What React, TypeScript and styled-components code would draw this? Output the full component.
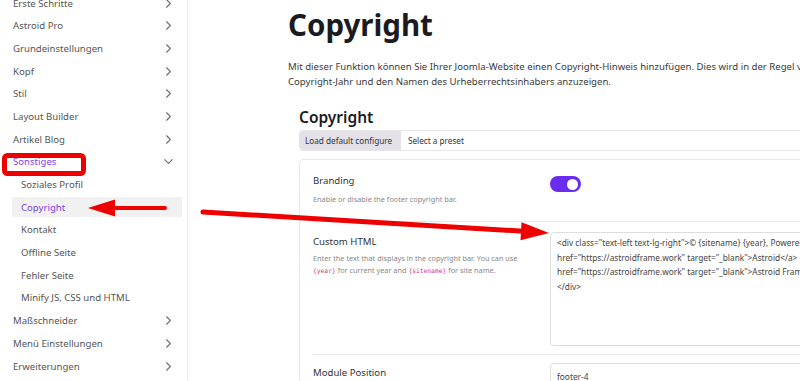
import React from 'react'
import styled, { createGlobalStyle } from 'styled-components'
import { ChevronRight, ChevronDown } from 'lucide-react'

const GlobalStyle = createGlobalStyle`
  html, body {
    margin: 0;
    padding: 0;
    background: #fff;
    overflow: hidden;
  }
  body {
    font-family: "Noto Sans", "Open Sans", sans-serif;
    color: #333;
  }
`

type TNavItem = {
  label: string
  sub?: boolean
  active?: boolean
  open?: boolean
  arrow?: boolean
}

const navItems: TNavItem[] = [
  { label: 'Erste Schritte', arrow: true },
  { label: 'Astroid Pro', arrow: true },
  { label: 'Grundeinstellungen', arrow: true },
  { label: 'Kopf', arrow: true },
  { label: 'Stil', arrow: true },
  { label: 'Layout Builder', arrow: true },
  { label: 'Artikel Blog', arrow: true },
  { label: 'Sonstiges', arrow: true, open: true, active: true },
  { label: 'Soziales Profil', sub: true },
  { label: 'Copyright', sub: true, active: true },
  { label: 'Kontakt', sub: true },
  { label: 'Offline Seite', sub: true },
  { label: 'Fehler Seite', sub: true },
  { label: 'Minify JS, CSS und HTML', sub: true },
  { label: 'Maßschneider', arrow: true },
  { label: 'Menü Einstellungen', arrow: true },
  { label: 'Erweiterungen', arrow: true },
]

const codeLines = [
  '<div class="text-left text-lg-right">© {sitename} {year}, Powered by <a',
  'href="https://astroidframe.work" target="_blank">Astroid</a> - Joomla Template by <a',
  'href="https://astroidframe.work" target="_blank">Astroid Framework</a>',
  '</div>',
]

const App = () => {
  return (
    <Page>
      <GlobalStyle />
      <Sidebar>
        <NavList>
          {navItems.map((item) => (
            <NavItem key={item.label} $sub={item.sub} $active={item.active}>
              <span>{item.label}</span>
              {item.arrow &&
                (item.open ? (
                  <ChevronDown size={15} strokeWidth={1.8} color="#707070" />
                ) : (
                  <ChevronRight size={15} strokeWidth={1.8} color="#707070" />
                ))}
            </NavItem>
          ))}
        </NavList>
      </Sidebar>

      <Main>
        <PageTitle>Copyright</PageTitle>
        <Intro>
          <span>
            Mit dieser Funktion können Sie Ihrer Joomla-Website einen Copyright-Hinweis hinzufügen. Dies wird in der Regel verwendet, um das
          </span>
          <span>Copyright-Jahr und den Namen des Urheberrechtsinhabers anzuzeigen.</span>
        </Intro>

        <Section>
          <SectionTitle>Copyright</SectionTitle>
          <Toolbar>
            <DefaultBtn>Load default configure</DefaultBtn>
            <PresetSelect>Select a preset</PresetSelect>
          </Toolbar>

          <Card>
            <FieldRow $pad="14px 0 16px">
              <FieldInfo>
                <FieldLabel>Branding</FieldLabel>
                <FieldDesc $gap={5}>Enable or disable the footer copyright bar.</FieldDesc>
              </FieldInfo>
              <div>
                <Toggle>
                  <Knob />
                </Toggle>
              </div>
            </FieldRow>

            <FieldRow $pad="10px 0 8px">
              <FieldInfo $offset={3}>
                <FieldLabel>Custom HTML</FieldLabel>
                <FieldDesc $gap={3}>
                  Enter the text that displays in the copyright bar. You can use{' '}
                  <Code>{'{year}'}</Code> for current year and <Code>{'{sitename}'}</Code> for site name.
                </FieldDesc>
              </FieldInfo>
              <TextArea>
                {codeLines.map((line) => (
                  <CodeLine key={line}>{line}</CodeLine>
                ))}
              </TextArea>
            </FieldRow>

            <FieldRow $pad="8px 0 8px" $last>
              <FieldInfo $offset={3}>
                <FieldLabel>Module Position</FieldLabel>
              </FieldInfo>
              <Input>footer-4</Input>
            </FieldRow>
          </Card>
        </Section>
      </Main>

      <Annotations width="800" height="381" viewBox="0 0 800 381">
        <rect x="4.5" y="155.5" width="79" height="18" rx="3" fill="none" stroke="#ee0000" strokeWidth="5" />
        <line x1="165" y1="208" x2="110" y2="208" stroke="#ee0000" strokeWidth="4" strokeLinecap="round" />
        <polygon points="88,208 115,199.5 115,216.5" fill="#ee0000" />
        <line x1="203" y1="212" x2="524" y2="231.3" stroke="#ee0000" strokeWidth="5" strokeLinecap="round" />
        <polygon points="549,233 521.5,222.3 520.5,240.3" fill="#ee0000" />
      </Annotations>
    </Page>
  )
}

export default App

const Page = styled.div`
  position: relative;
  display: flex;
  width: 800px;
  height: 381px;
  overflow: hidden;
`

const Sidebar = styled.aside`
  flex: 0 0 188px;
  height: 100%;
  border-right: 1px solid #ececec;
  overflow: hidden;
  box-sizing: border-box;
`

const NavList = styled.ul`
  list-style: none;
  margin: -7px 0 0;
  padding: 0 5px 0 0;
`

const NavItem = styled.li<{ $sub?: boolean; $active?: boolean }>`
  display: flex;
  align-items: center;
  justify-content: space-between;
  height: 20px;
  margin-bottom: 2.69px;
  margin-left: ${(p) => (p.$sub ? '12px' : '0')};
  padding: ${(p) => (p.$sub ? '0 6px 0 9px' : '0 6px 0 13px')};
  font-size: 9.6px;
  color: ${(p) => (p.$active ? '#7b3fe4' : '#555')};
  background: ${(p) => (p.$sub && p.$active ? '#f1f1f1' : 'transparent')};
  white-space: nowrap;
`

const Main = styled.main`
  flex: 1;
  min-width: 0;
  padding: 6px 0 0 100px;
  overflow: hidden;
`

const PageTitle = styled.h1`
  margin: 0;
  font-size: 29.5px;
  line-height: 37px;
  font-weight: 700;
  color: #1b1b1f;
`

const Intro = styled.p`
  display: flex;
  flex-direction: column;
  margin: 16px 0 0;
  font-size: 9.6px;
  line-height: 15px;
  color: #3a3a3a;
  white-space: nowrap;
`

const Section = styled.section`
  margin: 17px 0 0 11px;
  width: 620px;
`

const SectionTitle = styled.h2`
  margin: 0;
  font-size: 15.5px;
  line-height: 22px;
  font-weight: 600;
  color: #1b1b1f;
`

const Toolbar = styled.div`
  display: flex;
  height: 21px;
  margin-top: 2px;
  border: 1px solid #e6e6e6;
  border-left: none;
  border-radius: 4px;
  box-sizing: border-box;
  font-size: 8.2px;
  color: #333;
`

const DefaultBtn = styled.div`
  display: flex;
  align-items: center;
  padding: 0 6px;
  width: 102px;
  box-sizing: border-box;
  background: #e4e1e9;
  border-radius: 4px 0 0 4px;
  white-space: nowrap;
`

const PresetSelect = styled.div`
  display: flex;
  align-items: center;
  padding: 0 7px;
  flex: 1;
`

const Card = styled.div`
  margin-top: 8px;
  padding: 0 0 0 13px;
  border: 1px solid #e8e8e8;
  border-radius: 4px;
`

const FieldRow = styled.div<{ $pad: string; $last?: boolean }>`
  display: grid;
  grid-template-columns: 237px 1fr;
  padding: ${(p) => p.$pad};
  border-bottom: ${(p) => (p.$last ? 'none' : '1px solid #e8e8e8')};
`

const FieldInfo = styled.div<{ $offset?: number }>`
  display: flex;
  flex-direction: column;
  padding-top: ${(p) => p.$offset ?? 0}px;
  padding-right: 20px;
`

const FieldLabel = styled.div`
  font-size: 9.6px;
  line-height: 14px;
  color: #333;
`

const FieldDesc = styled.div<{ $gap: number }>`
  margin-top: ${(p) => p.$gap}px;
  font-size: 7.3px;
  line-height: 12px;
  color: #888;
`

const Code = styled.code`
  font-family: "DejaVu Sans Mono", monospace;
  font-size: 6.3px;
  color: #d63384;
`

const Toggle = styled.div`
  display: flex;
  align-items: center;
  justify-content: flex-end;
  width: 31px;
  height: 16px;
  margin-top: 2px;
  padding: 0 3px;
  box-sizing: border-box;
  border-radius: 8px;
  background: #6a2cef;
`

const Knob = styled.div`
  width: 11px;
  height: 11px;
  border-radius: 50%;
  background: #fff;
`

const TextArea = styled.div`
  height: 114px;
  padding: 3px 6px;
  box-sizing: border-box;
  border: 1px solid #dedede;
  border-radius: 4px;
  overflow: hidden;
  font-size: 8.3px;
  line-height: 14.5px;
  color: #444;
`

const CodeLine = styled.div`
  white-space: nowrap;
`

const Input = styled.div`
  display: flex;
  align-items: center;
  height: 24px;
  padding: 0 6px;
  border: 1px solid #dedede;
  border-radius: 4px;
  font-size: 8.3px;
  color: #444;
`

const Annotations = styled.svg`
  position: absolute;
  left: 0;
  top: 0;
  pointer-events: none;
`
